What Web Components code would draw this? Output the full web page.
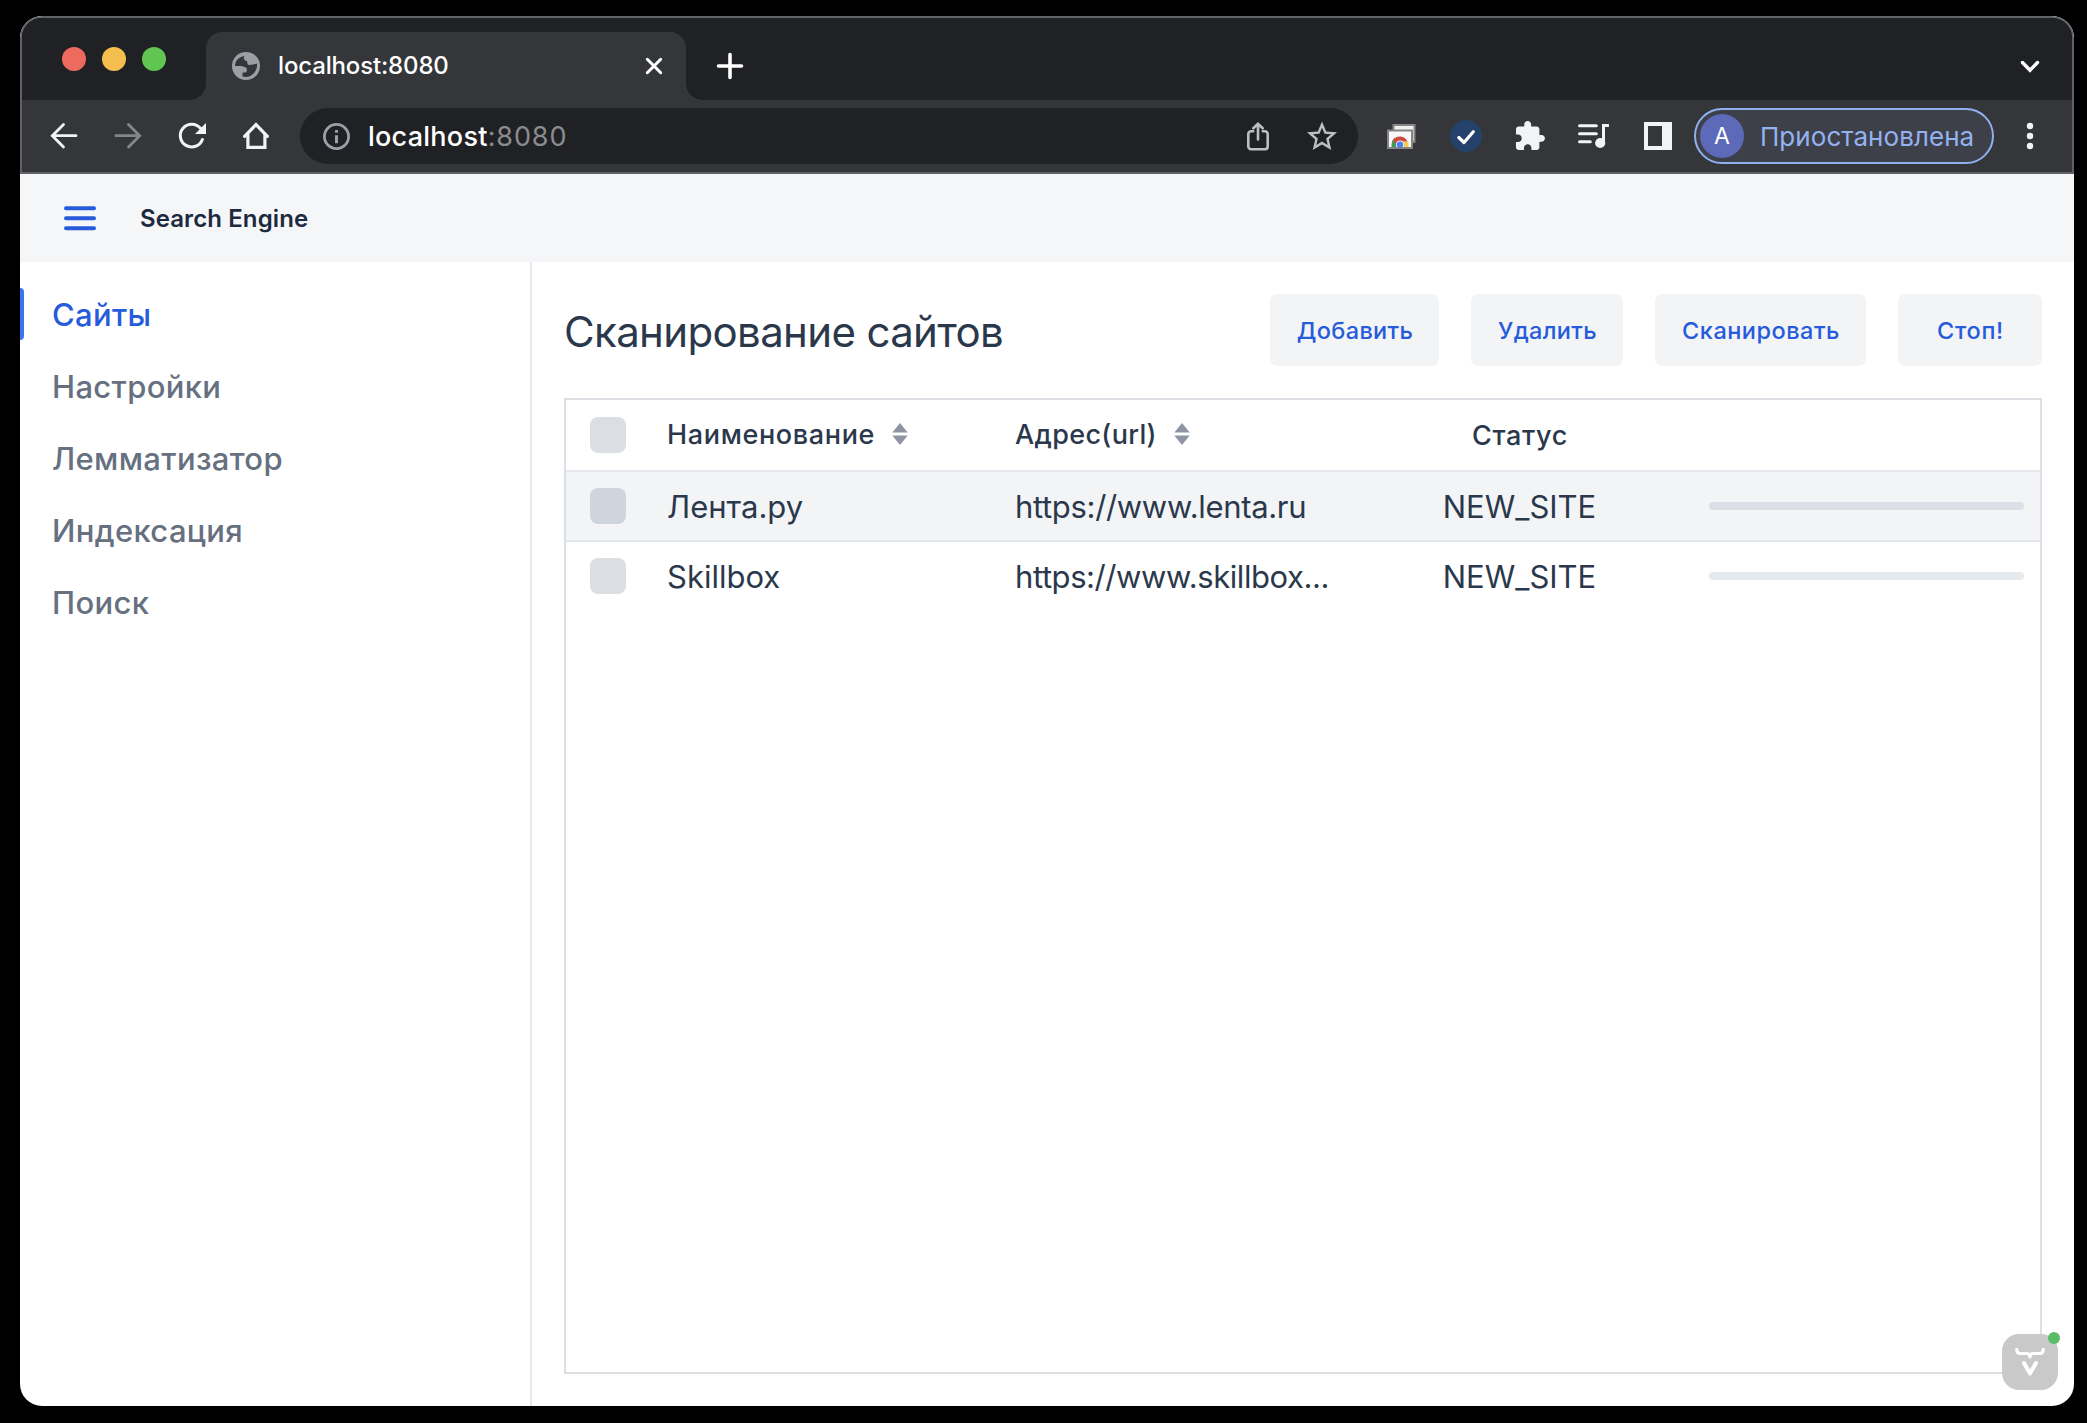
<!DOCTYPE html>
<html lang="ru">
<head>
<meta charset="utf-8">
<title>Search Engine</title>
<style>
  html, body { margin: 0; height: 100%; background: #000; }
  body {
    display: flex; flex-direction: column; box-sizing: border-box;
    height: 1423px; padding: 16px 13px 17px 20px; overflow: hidden;
    font-family: Inter, "Noto Sans", sans-serif; font-size: 31px;
  }
</style>
</head>
<body>
<browser-window>
  <tab-strip slot="chrome"><browser-tab>localhost:8080</browser-tab></tab-strip>
  <tool-bar slot="chrome"></tool-bar>
  <app-layout>
    <app-header slot="header">Search Engine</app-header>
    <nav-item slot="drawer" active>Сайты</nav-item>
    <nav-item slot="drawer">Настройки</nav-item>
    <nav-item slot="drawer">Лемматизатор</nav-item>
    <nav-item slot="drawer">Индексация</nav-item>
    <nav-item slot="drawer">Поиск</nav-item>
    <page-title>Сканирование сайтов
      <action-button slot="actions" style="width:169px">Добавить</action-button>
      <action-button slot="actions" style="width:152px">Удалить</action-button>
      <action-button slot="actions" style="width:211px;letter-spacing:.5px">Сканировать</action-button>
      <action-button slot="actions" style="width:144px;letter-spacing:.7px">Стоп!</action-button>
    </page-title>
    <data-grid>
      <grid-head></grid-head>
      <grid-row shaded><span slot="name">Лента.ру</span><span slot="url" style="letter-spacing:-.33px">https://www.lenta.ru</span><span slot="status">NEW_SITE</span></grid-row>
      <grid-row><span slot="name">Skillbox</span><span slot="url" style="letter-spacing:-.42px">https://www.skillbox...</span><span slot="status">NEW_SITE</span></grid-row>
    </data-grid>
  </app-layout>
  <dev-badge slot="badge"></dev-badge>
</browser-window>

<script>
const define = (name, html) => {
  const template = document.createElement('template');
  template.innerHTML = html;
  customElements.define(name, class extends HTMLElement {
    constructor() {
      super();
      this.attachShadow({ mode: 'open' }).append(template.content.cloneNode(true));
    }
  });
};

define('browser-window', `
<style>
  :host { display: flex; flex-direction: column; flex: 1; position: relative; border-radius: 22px; overflow: hidden; background: #fff; }
  .chrome { display: flex; flex-direction: column; box-sizing: border-box; height: 158px; flex: none; border: 2px solid #616266; border-radius: 22px 22px 0 0; overflow: hidden; background: #202124; }
  slot[name=badge] { display: block; position: absolute; right: 16px; bottom: 16px; }
</style>
<div class="chrome"><slot name="chrome"></slot></div>
<slot></slot>
<slot name="badge"></slot>`);

define('tab-strip', `
<style>
  :host { display: flex; align-items: stretch; height: 82px; flex: none; background: #202124; }
  .lights { display: flex; gap: 16px; padding: 29px 0 0 40px; width: 144px; flex: none; }
  i { width: 24px; height: 24px; border-radius: 50%; }
  svg { flex: none; margin-top: 14px; }
  .plus { margin-left: 12px; }
  .chev { margin: 14px 10px 0 auto; }
</style>
<div class="lights"><i style="background:#ed6a5e"></i><i style="background:#f5bf4f"></i><i style="background:#61c554"></i></div>
<slot></slot>
<svg class="plus" width="64" height="68" viewBox="0 0 64 68"><path d="M32 22.5v23M20.5 34h23" stroke="#fff" stroke-width="3.6" stroke-linecap="round"/></svg>
<svg class="chev" width="64" height="68" viewBox="0 0 64 68"><path d="M24.5 30.500l7.5 7.700 7.500-7.700" fill="none" stroke="#fff" stroke-width="3.4" stroke-linecap="round" stroke-linejoin="miter"/></svg>`);

define('browser-tab', `
<style>
  :host { display: flex; align-items: center; box-sizing: border-box; width: 480px; flex: none; height: 68px; margin-top: 14px; padding: 0 20px 0 26px; position: relative;
    border-radius: 16px 16px 0 0; background: #35363a; color: #fff; font-size: 24px; font-weight: 500; letter-spacing: -.15px; }
  :host::before, :host::after { content: ""; position: absolute; bottom: 0; width: 16px; height: 16px; }
  :host::before { left: -16px; background: radial-gradient(circle at 0 0, #202124 15.500px, #35363a 16px); }
  :host::after { right: -16px; background: radial-gradient(circle at 100% 0, #202124 15.500px, #35363a 16px); }
  span { flex: 1; margin-left: 18px; padding-bottom: 1px; }
</style>
<svg width="28" height="28" viewBox="0 0 28 28"><circle cx="14" cy="14" r="14" fill="#9aa0a6"/><path d="M3 14C3 9 6.500 4.800 12.500 4c-1.500 2-.5 4.500 2.500 5l.5 3c1.500 2 3.500.500 5.500.500l4-1C25.800 18 21 24.500 14 25l-3.500-.5v-4h3c1.500-1 2-3 .5-5L9.500 14z" fill="#35363a"/></svg>
<span><slot></slot></span>
<svg width="24" height="24" viewBox="0 0 24 24"><path d="M5.300 5.300l13.400 13.400M18.700 5.300L5.300 18.700" stroke="#fff" stroke-width="3" stroke-linecap="round"/></svg>`);

define('tool-bar', `
<style>
  :host { display: flex; align-items: center; height: 72px; flex: none; padding: 0 10px; background: #35363a; color: #f1f3f4; }
  svg { width: 32px; height: 32px; flex: none; padding: 0 16px; overflow: visible; fill: none; stroke-linecap: round; }
  svg.dim { color: #85868a; }
  .f { fill: #f1f3f4; }
  address-bar { margin: 0 12px; }
  profile-chip { margin: 0 4px; }
</style>
<svg viewBox="0 0 32 32" stroke="currentColor" stroke-width="2.800"><path d="M28 15.700H4.500M15.500 4.500L4.300 15.700l11.200 11.300"/></svg>
<svg class="dim" viewBox="0 0 32 32" stroke="currentColor" stroke-width="2.800"><path d="M4 15.700h23.500M16.500 4.500l11.200 11.200L16.500 27"/></svg>
<svg viewBox="0 0 32 32"><path d="M26.400 19.500A11.400 11.400 0 1 1 24.500 8.300" stroke="#f1f3f4" stroke-width="3"/><path class="f" d="M30 3v11H19z"/></svg>
<svg viewBox="0 0 32 32" stroke="#f1f3f4" stroke-width="3.200"><path d="M4.600 16.300L16 4.600l11.400 11.700"/><path d="M7.900 14v13.400h17V14"/></svg>
<address-bar>localhost<span slot="port">:8080</span></address-bar>
<svg viewBox="0 0 32 32">
  <path d="M7.500 5h21v17h-21z" fill="#f0f0f0" stroke="#858585" stroke-width="2"/>
  <path d="M2 10.500h24V28H2z" fill="#f8f8f8" stroke="#858585" stroke-width="2"/>
  <path d="M5.500 27v-2.500a8.500 8.500 0 0 1 3-6.500l4 9z" fill="#3f9b58"/>
  <path d="M22.500 27v-5.500H14V27z" fill="#f5cd50"/>
  <path d="M6.800 20a8.500 8.500 0 0 1 14.700 1.500H14l-4 3z" fill="#cb4c3e"/>
  <path d="M10 27v-2.500a4 4 0 0 1 8 0V27z" fill="#e8ecf4"/><circle cx="14" cy="24.600" r="3.200" fill="#4c82ee"/>
</svg>
<svg viewBox="0 0 32 32"><circle cx="16" cy="16" r="16" fill="#24426b"/><path d="M8.800 17.500l5.200 5L23.300 11.700" stroke="#fff" stroke-width="3.200" stroke-linejoin="round"/></svg>
<svg viewBox="0 0 32 32"><path class="f" transform="translate(-.8 -.3) scale(1.380)" d="M20.500 11H19V7c0-1.100-.9-2-2-2h-4V3.500C13 2.120 11.880 1 10.500 1S8 2.120 8 3.500V5H4c-1.100 0-1.990.9-1.990 2v3.800H3.500c1.490 0 2.700 1.210 2.700 2.700s-1.210 2.700-2.700 2.700H2V20c0 1.100.9 2 2 2h3.800v-1.500c0-1.490 1.210-2.700 2.700-2.700 1.490 0 2.700 1.210 2.700 2.700V22H17c1.100 0 2-.9 2-2v-4h1.500c1.380 0 2.500-1.120 2.500-2.500S21.880 11 20.500 11z"/></svg>
<svg viewBox="0 0 32 32" stroke="#f1f3f4" stroke-width="3"><path d="M1.500 5.700h16.800M1.500 13.700h16.800M1.500 21.700h10.800"/><path d="M25.500 23V5.500H31" stroke-linecap="butt"/><circle class="f" cx="22.200" cy="23" r="3.600"/></svg>
<svg viewBox="0 0 32 32"><path class="f" fill-rule="evenodd" d="M2 2h28v28H2zM6 6v20h14V6z"/></svg>
<profile-chip>Приостановлена</profile-chip>
<svg viewBox="0 0 32 32"><g class="f"><circle cx="16" cy="6" r="3.200"/><circle cx="16" cy="16" r="3.200"/><circle cx="16" cy="26" r="3.200"/></g></svg>`);

define('address-bar', `
<style>
  :host { display: flex; align-items: center; flex: 1; box-sizing: border-box; height: 56px; padding: 0 4px 0 20px; border-radius: 28px; background: #202124; color: #fff; font-size: 27px; font-weight: 500; letter-spacing: .25px; }
  .url { flex: 1; margin-left: 16px; }
  .port { color: #8b8c8f; font-weight: 400; letter-spacing: .9px; }
  svg { width: 32px; height: 32px; flex: none; fill: none; stroke-linecap: round; }
  svg.act { padding: 0 16px; }
</style>
<svg viewBox="0 0 32 32"><circle cx="16.500" cy="16.500" r="12.100" stroke="#9aa0a6" stroke-width="2.800"/><path d="M15 10h3v2.800h-3zM15 15.300h3v8h-3z" fill="#9aa0a6"/></svg>
<span class="url"><slot></slot><span class="port"><slot name="port"></slot></span></span>
<svg class="act" viewBox="0 0 32 32" stroke="#bdbec1" stroke-width="2.600"><path d="M16 19.500V4M11.300 8.300L16 3.800l4.700 4.500"/><path d="M11.200 11.300H9a2.700 2.700 0 0 0-2.700 2.700v12.500A2.700 2.700 0 0 0 9 29.200h14a2.700 2.700 0 0 0 2.700-2.700V14a2.700 2.700 0 0 0-2.700-2.700h-2.200"/></svg>
<svg class="act" viewBox="0 0 32 32"><path fill="#bdbec1" transform="translate(-2 -1.500) scale(1.500)" d="M22 9.240l-7.190-.62L12 2 9.190 8.630 2 9.240l5.460 4.730L5.820 21 12 17.270 18.180 21l-1.630-7.030L22 9.240zM12 15.400l-3.760 2.270 1-4.280-3.320-2.880 4.380-.38L12 6.100l1.710 4.040 4.380.38-3.320 2.880 1 4.280L12 15.400z"/></svg>`);

define('profile-chip', `
<style>
  :host { display: flex; align-items: center; box-sizing: border-box; width: 300px; height: 56px; flex: none; padding-left: 4px; border: 2px solid #8fb0f0; border-radius: 28px; background: #3e4049; color: #94b2f0; font-size: 26px; letter-spacing: .05px; white-space: nowrap; }
  .avatar { display: flex; align-items: center; justify-content: center; width: 44px; height: 44px; flex: none; margin-right: 16px; border-radius: 50%; background: #5d69b9; color: #fff; font-size: 23px; }
</style>
<span class="avatar">A</span><slot></slot>`);

define('app-layout', `
<style>
  :host { display: flex; flex-direction: column; flex: 1; min-height: 0; }
  .body { display: flex; flex: 1; min-height: 0; }
  nav { display: flex; flex-direction: column; box-sizing: border-box; width: 512px; flex: none; padding-top: 16px; border-right: 2px solid #e6e8ec; }
  main { display: flex; flex-direction: column; gap: 32px; flex: 1; min-width: 0; padding: 32px; }
</style>
<slot name="header"></slot>
<div class="body"><nav><slot name="drawer"></slot></nav><main><slot></slot></main></div>`);

define('app-header', `
<style>
  :host { display: flex; align-items: center; height: 88px; flex: none; padding-left: 44px; background: #f5f6f8; color: #1c2a3f; font-size: 24px; font-weight: 600; letter-spacing: .1px; }
  svg { margin-right: 44px; }
</style>
<svg width="32" height="32" viewBox="0 0 32 32"><path d="M2 6.200h28M2 16.200h28M2 26.200h28" stroke="#265bdb" stroke-width="4" stroke-linecap="round"/></svg><slot></slot>`);

define('nav-item', `
<style>
  :host { display: flex; align-items: center; height: 72px; flex: none; color: #66707f; font-weight: 500; letter-spacing: .33px; }
  i { width: 4px; height: 52px; margin-right: 28px; border-radius: 0 4px 4px 0; }
  :host([active]) { color: #265bdb; }
  :host([active]) i { background: #3a74f5; }
  span { padding-top: 1px; }
</style>
<i></i><span><slot></slot></span>`);

define('page-title', `
<style>
  :host { display: flex; align-items: center; justify-content: space-between; height: 72px; flex: none; color: #2b384c; }
  h2 { margin: 0; padding-top: 2px; font-size: 42px; font-weight: 400; letter-spacing: -.65px; }
  .actions { display: flex; gap: 32px; }
</style>
<h2><slot></slot></h2><div class="actions"><slot name="actions"></slot></div>`);

define('action-button', `
<style>
  :host { display: flex; align-items: center; justify-content: center; height: 72px; border-radius: 7px; background: #f3f4f6; color: #265bdb; font-size: 23.500px; font-weight: 500; letter-spacing: .35px; }
  span { padding: 1px 0 0 1px; }
</style>
<span><slot></slot></span>`);

define('data-grid', `
<style>
  :host { display: flex; flex-direction: column; flex: 1; border: 2px solid #dce0e5; color: #2b384c; }
</style>
<slot></slot>`);

define('check-box', `
<style>
  :host { display: block; width: 36px; height: 36px; margin-left: 24px; border-radius: 8px; background: var(--box, #dbdfe4); }
</style>`);

define('sort-icon', `
<style>:host { display: inline-flex; margin-left: 16px; }</style>
<svg width="18" height="24" viewBox="0 0 18 24"><path d="M9 1l7.700 9.500H1.300zM9 23l7.700-9.500H1.300z" fill="#8d95a3"/></svg>`);

define('grid-head', `
<style>
  :host { display: grid; grid-template-columns: 101px 348px 347px 316px 362px; align-items: center; height: 70px; flex: none; border-bottom: 2px solid #e4e8ec; font-size: 27px; font-weight: 500; }
  div { display: flex; align-items: center; letter-spacing: .65px; padding-bottom: 2px; }
</style>
<check-box></check-box>
<div>Наименование<sort-icon></sort-icon></div>
<div style="letter-spacing:.35px">Адрес(url)<sort-icon></sort-icon></div>
<div style="justify-content:center;padding:0">Статус</div>`);

define('grid-row', `
<style>
  :host { display: grid; grid-template-columns: 101px 348px 347px 316px 362px; align-items: center; height: 68px; flex: none; }
  :host([shaded]) { background: #f3f4f6; border-bottom: 2px solid #e4e7ea; --box: #d0d5dd; --track: #dce0e6; }
  div { padding-top: 1px; }
  .status { text-align: center; padding-right: 1px; letter-spacing: 0; }
  .track { height: 8px; margin: 0 16px 0 31px; padding: 0; border-radius: 4px; background: var(--track, #e6e9ed); }
</style>
<check-box></check-box>
<div><slot name="name"></slot></div>
<div><slot name="url"></slot></div>
<div class="status"><slot name="status"></slot></div>
<div class="track"></div>`);

define('dev-badge', `
<style>
  :host { display: block; position: relative; width: 56px; height: 56px; border-radius: 17px; background: #c9c9c9; }
  i { position: absolute; top: -2px; right: -2px; width: 12px; height: 12px; border-radius: 50%; background: #5abc65; }
</style>
<svg width="56" height="56" viewBox="0 0 56 56" fill="none" stroke="#fff" stroke-linecap="round" stroke-linejoin="round"><path d="M14.800 15.300c0 3 .8 4.200 3 4.200h6.500c2.500 0 3.700.800 3.700 3.500 0-2.700 1.200-3.500 3.700-3.500h6.500c2.200 0 3-1.200 3-4.200" stroke-width="3.200"/><path d="M22 29l6 10.500L34 29" stroke-width="4"/></svg><i></i>`);
</script>
</body>
</html>
